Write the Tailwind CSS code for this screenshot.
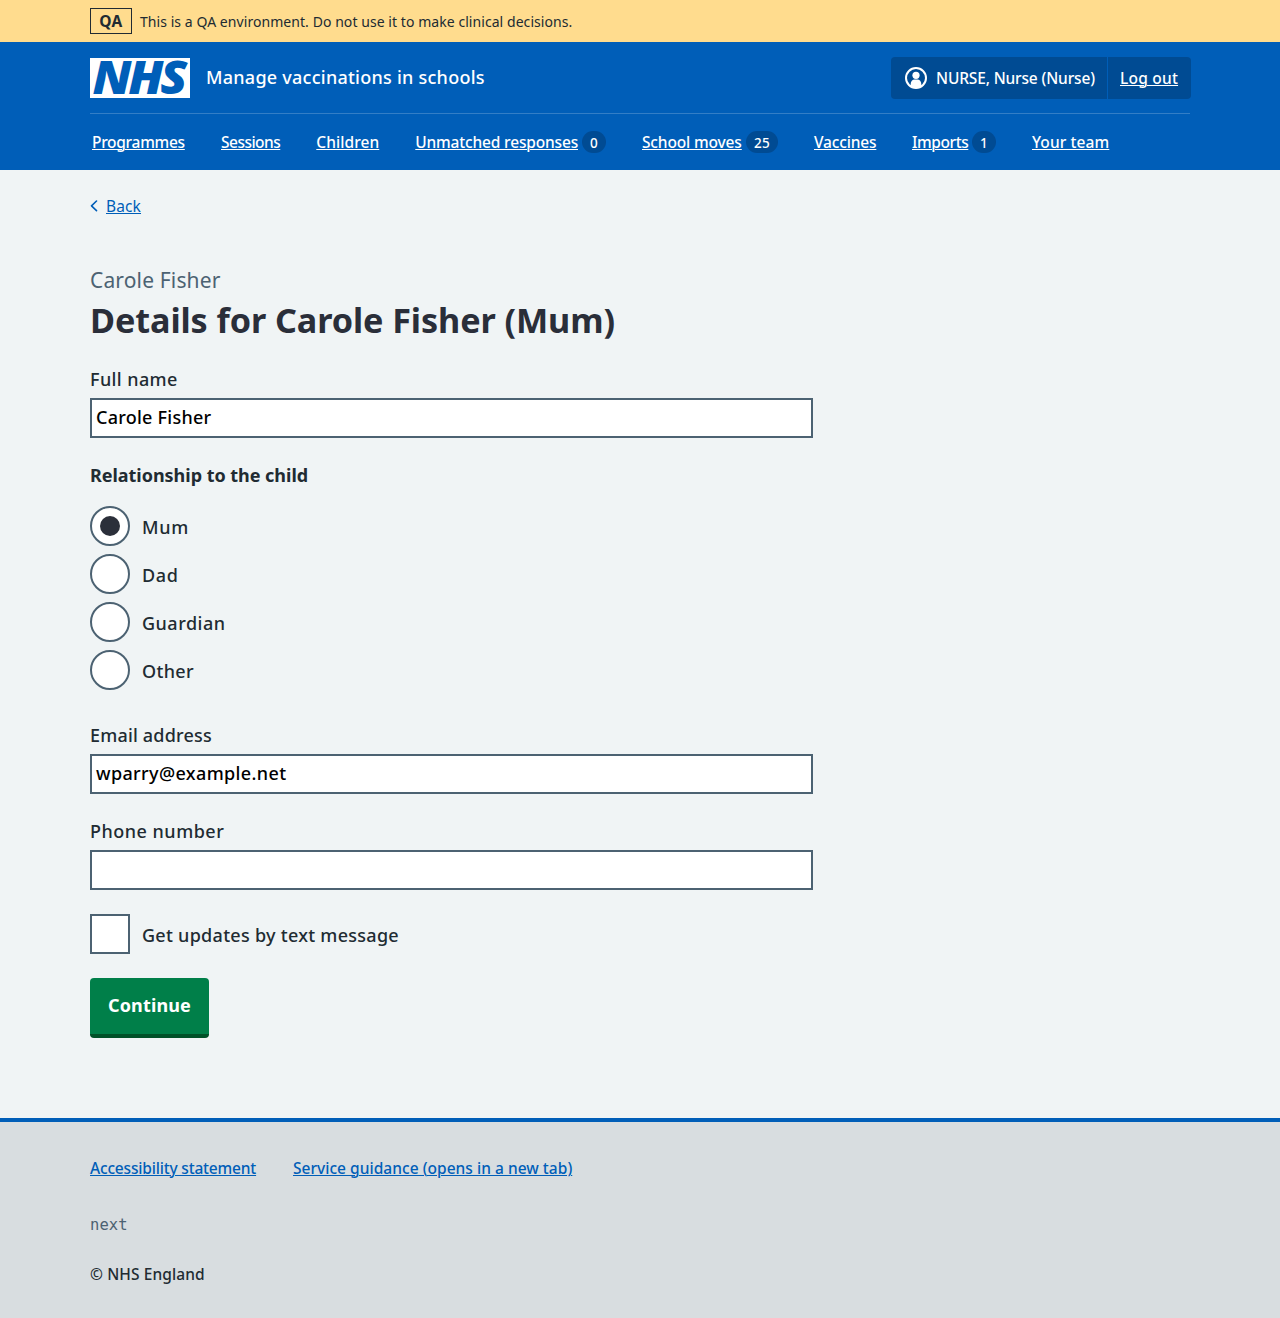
<!DOCTYPE html>
<html lang="en">
<head>
<meta charset="utf-8">
<title>Details for Carole Fisher (Mum)</title>
<script src="https://cdn.jsdelivr.net/npm/@tailwindcss/browser@4"></script>
</head>
<body class="bg-[#f0f4f5] font-['Noto_Sans',sans-serif] text-[18px] font-medium leading-7 tracking-[0.25px] text-[#212b32]">

<div class="h-[42px] bg-[#ffdc8e]">
  <div class="mx-auto flex h-full w-[1100px] items-center gap-2">
    <strong class="flex h-[26px] w-[42px] items-center justify-center border border-[#212b32] text-[15.5px] font-bold leading-6 tracking-[0.3px]">QA</strong>
    <span class="whitespace-nowrap pt-px text-sm font-normal tracking-[0.06px]">This is a QA environment. Do not use it to make clinical decisions.</span>
  </div>
</div>

<header class="bg-[#005eb8] text-white">
  <div class="mx-auto w-[1100px]">
    <div class="flex h-[71px] items-center">
      <svg class="h-10 w-[100px]" viewBox="0 0 100 40" aria-label="NHS">
        <rect width="100" height="40" fill="#fff"/>
        <text x="2.5" y="36.3" font-family="Open Sans" font-weight="800" font-style="italic" font-size="45.5" letter-spacing="-3" textLength="91.5" lengthAdjust="spacingAndGlyphs" fill="#005eb8">NHS</text>
      </svg>
      <span class="ml-4 whitespace-nowrap pb-[2px] tracking-[0.25px]">Manage vaccinations in schools</span>
      <div class="-mr-px ml-auto flex h-[42px] w-[300px] rounded bg-[#004b93] text-[15.5px] leading-6 tracking-[-0.15px]">
        <div class="flex w-[217px] items-center border-r border-[#005eb8] pl-[14px]">
          <svg class="h-[22px] w-[22px]" viewBox="0 0 22 22">
            <circle cx="11" cy="11" r="10" fill="none" stroke="#fff" stroke-width="2"/>
            <circle cx="11" cy="8.3" r="3.6" fill="#fff"/>
            <path d="M5.7 19V17c0-2.6 1.6-4.5 4-4.5h2.6c2.4 0 4 1.9 4 4.5v2c-3 2.5-7.6 2.5-10.6 0z" fill="#fff"/>
          </svg>
          <span class="ml-[9px] whitespace-nowrap">NURSE, Nurse (Nurse)</span>
        </div>
        <a class="flex-1 self-center whitespace-nowrap pl-3 tracking-[0.22px] underline decoration-1 underline-offset-1">Log out</a>
      </div>
    </div>
    <nav class="flex h-[57px] items-center gap-9 whitespace-nowrap border-t border-[#337ec6] pl-[2px] text-[15.5px] leading-6">
      <a class="w-[93px] tracking-[-0.29px] underline decoration-1 underline-offset-1">Programmes</a>
      <a class="w-[59.3px] tracking-[-0.52px] underline decoration-1 underline-offset-1">Sessions</a>
      <a class="w-[63px] tracking-[0.07px] underline decoration-1 underline-offset-1">Children</a>
      <div class="flex w-[190.7px] items-center justify-between"><a class="tracking-[-0.17px] underline decoration-1 underline-offset-1">Unmatched responses</a><span class="flex h-[22px] w-6 items-center justify-center rounded-full bg-[#004b93] pt-px text-[13.5px]">0</span></div>
      <div class="flex w-[136px] items-center justify-between"><a class="tracking-[-0.14px] underline decoration-1 underline-offset-1">School moves</a><span class="flex h-[22px] w-8 items-center justify-center rounded-full bg-[#004b93] pt-px text-[13.5px]">25</span></div>
      <a class="w-[62px] tracking-[-0.16px] underline decoration-1 underline-offset-1">Vaccines</a>
      <div class="flex w-[84px] items-center justify-between"><a class="tracking-[-0.42px] underline decoration-1 underline-offset-1">Imports</a><span class="flex h-[22px] w-6 items-center justify-center rounded-full bg-[#004b93] pt-px text-[13.5px]">1</span></div>
      <a class="tracking-[0.1px] underline decoration-1 underline-offset-1">Your team</a>
    </nav>
  </div>
</header>

<main class="mx-auto w-[1100px] pt-6">
  <a class="flex h-6 items-center text-[15.5px] leading-6 text-[#005eb8]">
    <svg class="h-3 w-2" viewBox="0 0 8 12"><path d="M6.5 1L1.5 5.8 6.5 10.6" fill="none" stroke="#005eb8" stroke-width="1.6" stroke-linecap="round" stroke-linejoin="round"/></svg>
    <span class="ml-2 font-normal tracking-[0.13px] underline decoration-1 underline-offset-1">Back</span>
  </a>

  <p class="mt-[46px] text-[21px] font-normal leading-8 tracking-[0.15px] text-[#4c6272]">Carole Fisher</p>
  <h1 class="mt-[2px] text-[34.2px] font-bold leading-[44px] tracking-[-0.09px] text-[#2a2e39]">Details for Carole Fisher (Mum)</h1>

  <form class="w-[723px]">
    <label class="mt-[23px] block tracking-[0.4px]">Full name</label>
    <div class="mt-[5px] flex h-10 items-center border-2 border-[#4c6272] bg-white px-1 pb-[2px] text-black">Carole Fisher</div>

    <h2 class="mt-[23px] text-[18px] font-bold leading-7 tracking-[-0.03px]">Relationship to the child</h2>
    <div class="mt-[17px] flex flex-col gap-2">
      <label class="flex h-10 items-center gap-3"><span class="flex h-10 w-10 items-center justify-center rounded-full border-2 border-[#4c6272] bg-white"><span class="h-5 w-5 rounded-full bg-[#2b2f3a]"></span></span><span class="pt-[2px] tracking-[0.7px]">Mum</span></label>
      <label class="flex h-10 items-center gap-3"><span class="h-10 w-10 rounded-full border-2 border-[#4c6272] bg-white"></span><span class="pt-[2px] tracking-[0.7px]">Dad</span></label>
      <label class="flex h-10 items-center gap-3"><span class="h-10 w-10 rounded-full border-2 border-[#4c6272] bg-white"></span><span class="pt-[2px] tracking-[0.5px]">Guardian</span></label>
      <label class="flex h-10 items-center gap-3"><span class="h-10 w-10 rounded-full border-2 border-[#4c6272] bg-white"></span><span class="pt-[2px] tracking-[0.35px]">Other</span></label>
    </div>

    <label class="mt-[31px] block tracking-[0.18px]">Email address</label>
    <div class="mt-[5px] flex h-10 items-center border-2 border-[#4c6272] bg-white px-1 pb-[2px] tracking-[0.37px] text-black">wparry@example.net</div>

    <label class="mt-[23px] block tracking-[0.5px]">Phone number</label>
    <div class="mt-[5px] h-10 border-2 border-[#4c6272] bg-white"></div>

    <label class="mt-6 flex h-10 items-center gap-3"><span class="h-10 w-10 border-2 border-[#4c6272] bg-white"></span><span class="pt-[2px] tracking-[0.28px]">Get updates by text message</span></label>

    <button type="button" class="mt-6 block h-[60px] w-[119px] rounded border-b-4 border-[#005128] bg-[#007f49] pb-[2px] text-[18px] font-bold leading-7 tracking-[0.13px] text-white">Continue</button>
  </form>
</main>

<footer class="mt-20 h-[200px] border-t-4 border-[#005eb8] bg-[#d8dde0] pt-[34px] text-[15.5px] leading-6">
  <div class="mx-auto w-[1100px]">
    <div class="flex gap-[37px] text-[#005eb8]">
      <a class="w-[166px] whitespace-nowrap tracking-[-0.18px] underline decoration-1 underline-offset-1">Accessibility statement</a>
      <a class="whitespace-nowrap tracking-[0.03px] underline decoration-1 underline-offset-1">Service guidance (opens in a new tab)</a>
    </div>
    <p class="mt-[33px] font-['DejaVu_Sans_Mono',monospace] text-[15.5px] font-normal leading-6 tracking-[0.1px] text-[#4c6272]">next</p>
    <p class="mt-[25px] tracking-[0.1px]">© NHS England</p>
  </div>
</footer>
</body>
</html>
